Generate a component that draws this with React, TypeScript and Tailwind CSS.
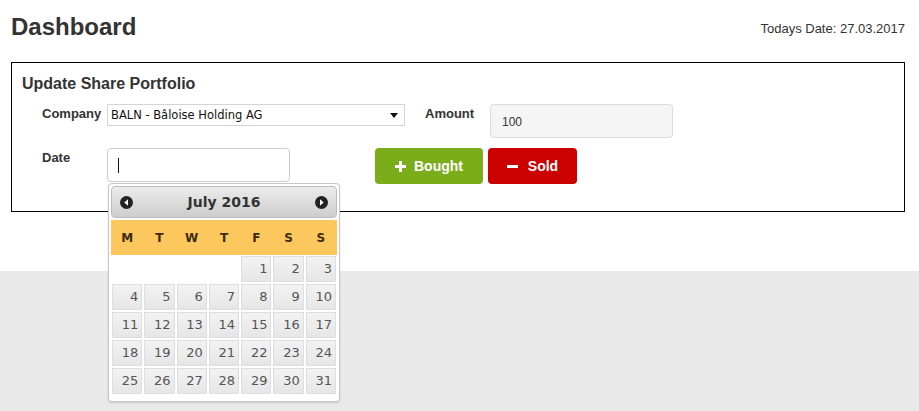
import React from 'react';

const dayNames = ['M', 'T', 'W', 'T', 'F', 'S', 'S'];

// July 2016 starts on a Friday
const weeks: (number | null)[][] = [
    [null, null, null, null, 1, 2, 3],
    [4, 5, 6, 7, 8, 9, 10],
    [11, 12, 13, 14, 15, 16, 17],
    [18, 19, 20, 21, 22, 23, 24],
    [25, 26, 27, 28, 29, 30, 31],
];

const NavArrow: React.FC<{ dir: 'prev' | 'next' }> = ({ dir }) => (
    <svg width="13" height="13" viewBox="0 0 14 14">
        <circle cx="7" cy="7" r="7" fill="#222" />
        {dir === 'prev' ? (
            <path d="M8.6 3.6 L4.6 7 L8.6 10.4 Z" fill="#fff" />
        ) : (
            <path d="M5.4 3.6 L9.4 7 L5.4 10.4 Z" fill="#fff" />
        )}
    </svg>
);

const DatePicker: React.FC = () => (
    <div className="absolute left-[108px] top-[183px] w-[232px] h-[219px] bg-white border border-[#c8c8c8] rounded-[4px] p-[2px] shadow-[0_1px_2px_rgba(0,0,0,0.15)] font-['DejaVu_Sans',sans-serif] z-10">
        <div className="h-[32px] flex items-center justify-between px-[8px] rounded-[4px] border border-[#bdbdbd] bg-linear-to-b from-[#ececec] to-[#cdcdcd]">
            <NavArrow dir="prev" />
            <span className="text-[14px] font-bold text-[#333]">July 2016</span>
            <NavArrow dir="next" />
        </div>
        <div className="mt-[2px] h-[35px] bg-[#fcc75d] grid grid-cols-7 items-center">
            {dayNames.map((d, i) => (
                <span key={i} className="text-center text-[12px] font-bold text-[#3a2b10]">{d}</span>
            ))}
        </div>
        <div className="mt-[1px] px-[1px] grid grid-cols-7 gap-[2px]">
            {weeks.flat().map((day, i) =>
                day === null ? (
                    <div key={i} className="h-[26px]" />
                ) : (
                    <div
                        key={i}
                        className="h-[26px] flex items-center justify-end pr-[3px] text-[13px] text-[#555] border border-[#dedede] bg-linear-to-b from-[#f2f2f2] to-[#e6e6e6]"
                    >
                        {day}
                    </div>
                )
            )}
        </div>
    </div>
);

export default function App() {
    return (
        <div className="min-h-screen flex flex-col bg-[#e9e9e9] font-['Liberation_Sans',Arial,sans-serif] text-[#333] relative">
            <div className="bg-white h-[271px] pt-[13px]">
                <div className="flex items-start justify-between pl-[11px] pr-[14px]">
                    <h1 className="text-[24px] font-bold leading-[28px]">Dashboard</h1>
                    <span className="text-[13px] mt-[6px]">Todays Date: 27.03.2017</span>
                </div>

                <div className="mt-[21px] ml-[11px] mr-[14px] h-[150px] border border-black pl-[10px] pt-[11px]">
                    <h2 className="text-[16px] font-bold leading-[20px]">Update Share Portfolio</h2>

                    {/* Company / Amount */}
                    <div className="flex items-start mt-[10px] pl-[20px]">
                        <label className="w-[65px] text-[13px] font-bold leading-[16px] pt-[2px]">Company</label>
                        <div className="w-[298px] h-[22px] border border-[#d4d4d4] flex items-center justify-between pl-[3px] pr-[6px]">
                            <span className="text-[11.5px] text-[#111] pt-[2px] font-['DejaVu_Sans',sans-serif]">BALN - Bâloise Holding AG</span>
                            <svg width="8" height="5" viewBox="0 0 8 5"><path d="M0 0 H8 L4 5 Z" fill="#111" /></svg>
                        </div>
                        <label className="ml-[20px] w-[65px] text-[13px] font-bold leading-[16px] pt-[2px]">Amount</label>
                        <div className="w-[183px] h-[34px] bg-[#f5f5f5] border border-[#dcdcdc] rounded-[4px] flex items-center pl-[11px] pt-[1px] text-[12px] text-[#333]">
                            100
                        </div>
                    </div>

                    {/* Date / Buttons */}
                    <div className="flex items-start mt-[10px] pl-[20px]">
                        <label className="w-[65px] text-[13px] font-bold leading-[16px] pt-[2px]">Date</label>
                        <div className="w-[183px] h-[34px] bg-white border border-[#cccccc] rounded-[4px] flex items-center pl-[10px]">
                            <span className="w-px h-[15px] bg-[#111]" />
                        </div>
                        <button className="ml-[85px] w-[108px] h-[36px] rounded-[4px] bg-[#7bac1a] text-white text-[14px] font-bold flex items-center justify-center gap-[8px]">
                            <svg width="11" height="11" viewBox="0 0 11 11"><path d="M4 0 H7 V4 H11 V7 H7 V11 H4 V7 H0 V4 H4 Z" fill="#fff" /></svg>
                            Bought
                        </button>
                        <button className="ml-[5px] w-[89px] h-[36px] rounded-[4px] bg-[#cc0000] text-white text-[14px] font-bold flex items-center justify-center gap-[10px]">
                            <svg width="11" height="3" viewBox="0 0 11 3"><rect width="11" height="3" fill="#fff" /></svg>
                            Sold
                        </button>
                    </div>
                </div>
            </div>
            <div className="flex-1" />
            <DatePicker />
        </div>
    );
}
